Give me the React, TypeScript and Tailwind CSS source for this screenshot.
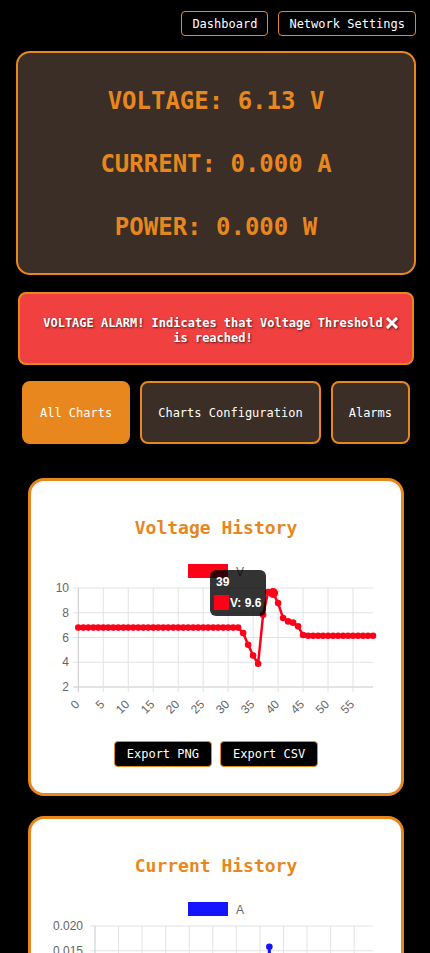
import React from 'react';

type Tick = { v: number; label: string };

type ChartProps = {
  values: number[];
  color: string;
  legend: string;
  yTicks: Tick[];
  yMax: number;
  yMin: number;
  plotLeft: number;
  labelEnd: number;
  hover?: { index: number; title: string; body: string; x: number; y: number };
};

const PLOT_TOP = 46;
const PLOT_RIGHT = 342;

function LineChart({ values, color, legend, yTicks, yMax, yMin, plotLeft, labelEnd, hover }: ChartProps) {
  const plotBottom = PLOT_TOP + (yTicks.length - 1) * (yTicks.length > 4 ? 24.75 : 24);
  const step = (PLOT_RIGHT - plotLeft) / (values.length - 1);
  const xi = (i: number) => plotLeft + i * step;
  const yv = (v: number) => PLOT_TOP + ((yMax - v) / (yMax - yMin)) * (plotBottom - PLOT_TOP);
  const points = values.map((v, i) => `${xi(i)},${yv(v)}`).join(' ');
  const xTicks = Array.from({ length: 12 }, (_, k) => k * 5);

  return (
    <svg width={370} height={188} className="block" style={{ fontFamily: '"Liberation Sans", Arial, sans-serif' }}>
      {/* legend */}
      <rect x={157} y={22} width={40} height={14} fill={color} />
      <text x={205} y={34} fontSize={12} fill="#666">
        {legend}
      </text>

      {/* grid */}
      {yTicks.map((t) => (
        <g key={t.label}>
          <line x1={plotLeft - 5} x2={PLOT_RIGHT} y1={yv(t.v)} y2={yv(t.v)} stroke={t.v === yMin ? '#c8c8c8' : '#e3e3e3'} strokeWidth={1} />
          <text x={labelEnd} y={yv(t.v) + 4} fontSize={12} fill="#666" textAnchor="end">
            {t.label}
          </text>
        </g>
      ))}
      {xTicks.map((i) => (
        <g key={i}>
          <line x1={xi(i)} x2={xi(i)} y1={PLOT_TOP} y2={plotBottom + 5} stroke={i === 0 ? '#c8c8c8' : '#e3e3e3'} strokeWidth={1} />
          <text
            transform={`translate(${xi(i) + 2},${plotBottom + 18}) rotate(-45)`}
            fontSize={12}
            fill="#666"
            textAnchor="end"
          >
            {i}
          </text>
        </g>
      ))}

      {/* data */}
      <polyline points={points} fill="none" stroke={color} strokeWidth={2.5} strokeLinejoin="round" />
      {values.map((v, i) => (
        <circle key={i} cx={xi(i)} cy={yv(v)} r={hover && hover.index === i ? 5 : 3.3} fill={color} />
      ))}

      {hover && (
        <g>
          <rect x={hover.x} y={hover.y} width={56} height={46} rx={6} fill="rgba(0,0,0,0.8)" />
          <text x={hover.x + 6} y={hover.y + 16} fontSize={12} fontWeight={700} fill="#fff">
            {hover.title}
          </text>
          <rect x={hover.x + 4} y={hover.y + 25} width={15} height={15} fill={color} />
          <text x={hover.x + 20} y={hover.y + 37} fontSize={12} fontWeight={600} fill="#fff">
            {hover.body}
          </text>
        </g>
      )}
    </svg>
  );
}

const voltage = [
  ...Array(33).fill(6.8),
  6.36, 5.42, 4.55, 3.88, 7.84, 9.67, 9.6, 8.78, 7.57, 7.3, 7.2, 6.9, 6.2,
  ...Array(14).fill(6.14),
];

const current = Array.from({ length: 60 }, (_, i) => (i === 37 ? 0.0158 : 0));

function ChartCard({ title, children }: { title: string; children: React.ReactNode }) {
  return (
    <div className="mx-auto w-[376px] rounded-[16px] border-[3px] border-[#e8871e] bg-white">
      <h3 className="mt-[33px] text-center text-[18px] leading-[28px] font-bold text-[#e8871e]">{title}</h3>
      {children}
      <div className="mt-[11px] mb-[26px] flex justify-center gap-[8px]">
        <button className="h-[26px] rounded-[4px] border border-[#e8871e] bg-black px-[12px] text-[12px] text-white">
          Export PNG
        </button>
        <button className="h-[26px] rounded-[4px] border border-[#e8871e] bg-black px-[12px] text-[12px] text-white">
          Export CSV
        </button>
      </div>
    </div>
  );
}

export default function App() {
  return (
    <div className="min-h-screen bg-black pb-10 font-['DejaVu_Sans_Mono',monospace] text-white">
      <div className="ml-4 w-[400px]">
        {/* top nav */}
        <nav className="flex justify-end gap-[10px] pt-[11px]">
          <button className="h-[25px] rounded-[4px] border border-[#e8871e] bg-black px-[10px] text-[12px] text-white">
            Dashboard
          </button>
          <button className="h-[25px] rounded-[4px] border border-[#e8871e] bg-black px-[10px] text-[12px] text-white">
            Network Settings
          </button>
        </nav>

        {/* readings */}
        <div className="mt-[15px] flex h-[224px] flex-col items-center justify-center gap-[35px] rounded-[14px] border-2 border-[#e8871e] bg-[#3a2e26] pt-[2px]">
          <div className="text-[24px] leading-[28px] font-bold text-[#e8871e]">VOLTAGE: 6.13 V</div>
          <div className="text-[24px] leading-[28px] font-bold text-[#e8871e]">CURRENT: 0.000 A</div>
          <div className="text-[24px] leading-[28px] font-bold text-[#e8871e]">POWER: 0.000 W</div>
        </div>

        {/* alarm */}
        <div className="mx-auto mt-[17px] flex h-[73px] w-[396px] items-start rounded-[8px] border-2 border-[#e8871e] bg-[#f04040] pt-[22px] pl-[23px] [text-shadow:1px_1px_2px_rgba(0,0,0,0.6)]">
          <p className="w-[340px] text-center text-[12px] leading-[15px] font-bold text-white">
            VOLTAGE ALARM! Indicates that Voltage Threshold is reached!
          </p>
          <button className="mt-[1px] ml-[3px] drop-shadow-[1px_1px_1px_rgba(0,0,0,0.6)]">
            <svg width={12} height={12} viewBox="0 0 12 12">
              <path d="M2 2 L10 10 M10 2 L2 10" stroke="#fff" strokeWidth={3} strokeLinecap="square" />
            </svg>
          </button>
        </div>

        {/* tabs */}
        <div className="mt-[16px] flex justify-center gap-[10px]">
          <button className="h-[63px] rounded-[8px] border-2 border-[#e8871e] bg-[#e8871e] px-4 text-[12px] text-white">
            All Charts
          </button>
          <button className="h-[63px] rounded-[8px] border-2 border-[#e8871e] bg-[#3a2e26] px-4 text-[12px] text-white">
            Charts Configuration
          </button>
          <button className="h-[63px] rounded-[8px] border-2 border-[#e8871e] bg-[#3a2e26] px-4 text-[12px] text-white">
            Alarms
          </button>
        </div>

        {/* charts */}
        <div className="mt-[34px] flex flex-col gap-[20px]">
          <ChartCard title="Voltage History">
            <LineChart
              values={voltage}
              color="#ff0019"
              legend="V"
              yMax={10}
              yMin={2}
              yTicks={[
                { v: 10, label: '10' },
                { v: 8, label: '8' },
                { v: 6, label: '6' },
                { v: 4, label: '4' },
                { v: 2, label: '2' },
              ]}
              plotLeft={47.3}
              labelEnd={38}
              hover={{ index: 39, title: '39', body: 'V: 9.6', x: 179, y: 28 }}
            />
          </ChartCard>
          <ChartCard title="Current History">
            <LineChart
              values={current}
              color="#1414ff"
              legend="A"
              yMax={0.02}
              yMin={0}
              yTicks={[
                { v: 0.02, label: '0.020' },
                { v: 0.015, label: '0.015' },
                { v: 0.01, label: '0.010' },
                { v: 0.005, label: '0.005' },
                { v: 0, label: '0.000' },
              ]}
              plotLeft={64}
              labelEnd={52}
            />
          </ChartCard>
        </div>
      </div>
    </div>
  );
}
